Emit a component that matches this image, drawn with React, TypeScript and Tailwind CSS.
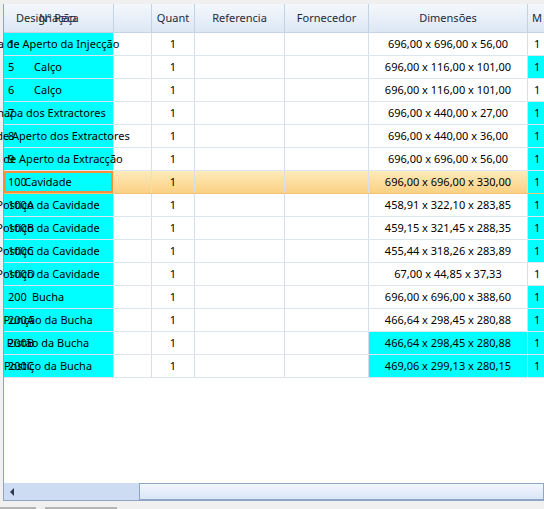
import React from "react";

type Row = {
  num: string;
  des: string;
  dim: string;
  mCyan?: boolean;
  dimCyan?: boolean;
  selected?: boolean;
};

const rows: Row[] = [
  { num: "1", des: "Placa de Aperto da Injecção", dim: "696,00 x 696,00 x 56,00" },
  { num: "5", des: "Calço", dim: "696,00 x 116,00 x 101,00", mCyan: true },
  { num: "6", des: "Calço", dim: "696,00 x 116,00 x 101,00" },
  { num: "7", des: "Chapa dos Extractores", dim: "696,00 x 440,00 x 27,00", mCyan: true },
  { num: "8", des: "Placa de Aperto dos Extractores", dim: "696,00 x 440,00 x 36,00", mCyan: true },
  { num: "9", des: "Placa de Aperto da Extracção", dim: "696,00 x 696,00 x 56,00", mCyan: true },
  { num: "100", des: "Cavidade", dim: "696,00 x 696,00 x 330,00", mCyan: true, selected: true },
  { num: "100A", des: "Postiço da Cavidade", dim: "458,91 x 322,10 x 283,85", mCyan: true },
  { num: "100B", des: "Postiço da Cavidade", dim: "459,15 x 321,45 x 288,35", mCyan: true },
  { num: "100C", des: "Postiço da Cavidade", dim: "455,44 x 318,26 x 283,89", mCyan: true },
  { num: "100D", des: "Postiço da Cavidade", dim: "67,00 x 44,85 x 37,33" },
  { num: "200", des: "Bucha", dim: "696,00 x 696,00 x 388,60", mCyan: true },
  { num: "200A", des: "Punção da Bucha", dim: "466,64 x 298,45 x 280,88", mCyan: true },
  { num: "200B", des: "Pistão da Bucha", dim: "466,64 x 298,45 x 280,88", mCyan: true, dimCyan: true },
  { num: "200C", des: "Postiço da Bucha", dim: "469,06 x 299,13 x 280,15", mCyan: true, dimCyan: true },
];

const head = "h-full flex items-center justify-center border-r border-[#c3d2e4] shrink-0";

export default function App() {
  return (
    <div
      className="w-[544px] h-[509px] bg-[#f0f0f0] overflow-hidden flex flex-col text-[11px] text-black"
      style={{ fontFamily: '"Noto Sans", "Open Sans", sans-serif' }}
    >
      {/* grid */}
      <div className="mt-[4px] ml-[3px] h-[497px] border-l border-b border-[#8ea4c0] bg-white flex flex-col">
        {/* header */}
        <div className="h-[29px] flex border-b border-[#c3d2e4] bg-gradient-to-b from-[#f4f8fd] to-[#dce7f4] text-[#1c2a3a] shrink-0">
          <div className={`${head} w-[110px] relative`}>
            <span className="absolute left-[12px] whitespace-nowrap">Designação</span>
            <span className="absolute left-[35px] whitespace-nowrap">Nº Peça</span>
          </div>
          <div className={`${head} w-[38px]`} />
          <div className={`${head} w-[43px]`}>Quant</div>
          <div className={`${head} w-[90px]`}>Referencia</div>
          <div className={`${head} w-[84px]`}>Fornecedor</div>
          <div className={`${head} w-[159px]`}>Dimensões</div>
          <div className={`${head} w-[40px] justify-start pl-[4px]`}>M</div>
        </div>

        {/* rows */}
        <div className="flex-1">
          {rows.map((r, i) => (
            <div
              key={i}
              className={
                "h-[23px] flex border-b " +
                (r.selected
                  ? "border-[#f2c272] bg-gradient-to-b from-[#feebb9] to-[#fbd083]"
                  : "border-[#dce5f0]")
              }
            >
              <div className="w-[110px] h-full shrink-0 border-r border-[#d6e0ec] relative">
                <div
                  className={
                    "absolute inset-0 bg-[#00ffff] " +
                    (r.selected ? "border-2 border-[#f5913c]" : "")
                  }
                />
                <span className="absolute left-[4px] top-1/2 -translate-y-1/2 whitespace-nowrap">
                  {r.num}
                </span>
                <span className="absolute left-[44px] top-1/2 -translate-x-1/2 -translate-y-1/2 whitespace-nowrap z-10">
                  {r.des}
                </span>
              </div>
              <div className="w-[38px] h-full shrink-0 border-r border-[#d6e0ec]" />
              <div className="w-[43px] h-full shrink-0 border-r border-[#d6e0ec] flex items-center justify-center">
                1
              </div>
              <div className="w-[90px] h-full shrink-0 border-r border-[#d6e0ec]" />
              <div className="w-[84px] h-full shrink-0 border-r border-[#d6e0ec]" />
              <div
                className={
                  "w-[159px] h-full shrink-0 border-r border-[#d6e0ec] flex items-center justify-center whitespace-nowrap " +
                  (r.dimCyan ? "bg-[#00ffff]" : "")
                }
              >
                {r.dim}
              </div>
              <div
                className={
                  "w-[40px] h-full shrink-0 flex items-center pl-[6px] " +
                  (r.mCyan ? "bg-[#00ffff]" : "")
                }
              >
                1
              </div>
            </div>
          ))}
        </div>

        {/* horizontal scrollbar */}
        <div className="h-[17px] flex shrink-0">
          <div className="w-[135px] h-full bg-[#cddcf3] flex items-center pl-[6px]">
            <svg width="5" height="8" viewBox="0 0 5 8">
              <path d="M4 0 L0 4 L4 8 Z" fill="#2b3a4f" />
            </svg>
          </div>
          <div className="flex-1 h-full border border-[#8ea6c6] bg-gradient-to-b from-[#f3f7fd] via-[#e6eefa] to-[#d9e6f7]" />
        </div>
      </div>

      {/* bottom strip */}
      <div className="flex-1 relative">
        <div className="absolute bottom-0 left-0 w-[36px] h-[2px] bg-[#b5b5b5]" />
        <div className="absolute bottom-0 left-[45px] w-[72px] h-[2px] bg-[#b5b5b5]" />
      </div>
    </div>
  );
}
